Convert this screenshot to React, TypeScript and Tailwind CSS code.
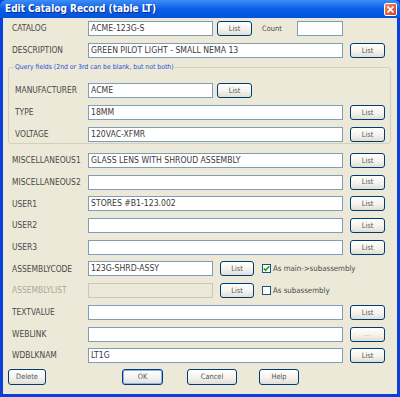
import React from 'react';

const face = "font-['DejaVu_Sans_Condensed','DejaVu_Sans',sans-serif]";

const Field = ({ value = '', w = 'w-[255px]', disabled = false }: { value?: string; w?: string; disabled?: boolean }) => (
  <div
    className={`${w} h-[15px] border px-[2px] text-[8.6px] leading-[13px] text-[#3a3a3a] whitespace-nowrap overflow-hidden ${
      disabled ? 'bg-[#ECE9D8] border-[#C9C7BA]' : 'bg-white border-[#7F9DB9]'
    }`}
  >
    {value}
  </div>
);

const Btn = ({ label = 'List', w = 'w-[35px]', h = 'h-[15px]', faded = false, primary = false }: { label?: string; w?: string; h?: string; faded?: boolean; primary?: boolean }) => (
  <div
    className={`${w} ${h} shrink-0 rounded-[3px] border border-[#003C74] bg-gradient-to-b from-white via-[#F5F4EF] to-[#E0DFD6] flex items-center justify-center text-[7.4px] leading-none ${
      faded ? 'text-[#B5B2A5]' : 'text-[#555]'
    } ${primary ? 'shadow-[inset_0_0_0_1px_#8AB4F0]' : ''}`}
  >
    {label}
  </div>
);

const Row = ({ label, value, labelW = 'w-[76px]', children, dim = false, mt }: { label: string; value?: string; labelW?: string; children?: React.ReactNode; dim?: boolean; mt: string }) => (
  <div className={`flex items-center h-[15px] ${mt}`}>
    <div className={`${labelW} shrink-0 text-[8.4px] leading-none ${dim ? 'text-[#ACA899]' : 'text-[#4a4a4a]'}`}>{label}</div>
    {children ?? (
      <>
        <Field value={value} />
        <div className="ml-[7px]">
          <Btn />
        </div>
      </>
    )}
  </div>
);

const Check = ({ checked, label }: { checked?: boolean; label: string }) => (
  <div className="flex items-center ml-[8px]">
    <div className="w-[9px] h-[9px] border border-[#1C5180] bg-white flex items-center justify-center">
      {checked && (
        <svg width="7" height="7" viewBox="0 0 7 7">
          <path d="M0.8 3.4 L2.6 5.4 L6.3 1.2" stroke="#21A121" strokeWidth="1.6" fill="none" />
        </svg>
      )}
    </div>
    <span className="ml-[2px] text-[7.8px] leading-none text-[#4a4a4a]">{label}</span>
  </div>
);

export default function App() {
  return (
    <div className={`w-[400px] h-[397px] flex flex-col bg-[#0B3FD9] ${face}`}>
      <div className="h-[18px] shrink-0 flex items-center justify-between bg-gradient-to-b from-[#3D8EF7] via-[#0A5DE6] to-[#0253DB] rounded-t-[6px]">
        <span className="pl-[5px] text-white font-bold text-[10px] leading-none [text-shadow:1px_1px_0_#0A2C8C]">
          Edit Catalog Record (table LT)
        </span>
        <div className="mr-[3px] w-[13px] h-[13px] rounded-[2px] border border-white bg-gradient-to-br from-[#EE8A6C] to-[#D33C14] flex items-center justify-center">
          <svg width="7" height="7" viewBox="0 0 7 7">
            <path d="M0.5 0.5 L6.5 6.5 M6.5 0.5 L0.5 6.5" stroke="white" strokeWidth="1.6" />
          </svg>
        </div>
      </div>

      <div className="flex-1 mx-[3px] mb-[3px] bg-[#ECE9D8] flex flex-col pl-[9px]">
        <Row label="CATALOG" mt="mt-[3px]">
          <Field value="ACME-123G-S" w="w-[125px]" />
          <div className="ml-[4px]">
            <Btn />
          </div>
          <span className="ml-[10px] w-[35px] text-[7.4px] leading-none text-[#4a4a4a]">Count</span>
          <Field w="w-[46px]" />
        </Row>
        <Row label="DESCRIPTION" value="GREEN PILOT LIGHT - SMALL NEMA 13" mt="mt-[7px]" />

        <div className="relative ml-[-4px] mt-[9px] w-[383px] border border-[#D0D0BF] rounded-[3px] pl-[6px] pt-[15px] pb-[1px]">
          <span className="absolute left-[5px] top-[-6px] px-[1px] bg-[#ECE9D8] text-[6.8px] leading-[10px] text-[#1E4FD6]">
            Query fields (2nd or 3rd can be blank, but not both)
          </span>
          <Row label="MANUFACTURER" labelW="w-[73px]" mt="mt-0">
            <Field value="ACME" w="w-[125px]" />
            <div className="ml-[4px]">
              <Btn />
            </div>
          </Row>
          <Row label="TYPE" value="18MM" labelW="w-[73px]" mt="mt-[7px]" />
          <Row label="VOLTAGE" value="120VAC-XFMR" labelW="w-[73px]" mt="mt-[7px]" />
        </div>

        <div className="flex flex-col gap-[6.7px] mt-[9px]">
          <Row label="MISCELLANEOUS1" value="GLASS LENS WITH SHROUD ASSEMBLY" mt="mt-0" />
          <Row label="MISCELLANEOUS2" mt="mt-0" />
          <Row label="USER1" value="STORES #B1-123.002" mt="mt-0" />
          <Row label="USER2" mt="mt-0" />
          <Row label="USER3" mt="mt-0" />
          <Row label="ASSEMBLYCODE" mt="mt-0">
            <Field value="123G-SHRD-ASSY" w="w-[125px]" />
            <div className="ml-[7px]">
              <Btn w="w-[34px]" />
            </div>
            <Check checked label="As main->subassembly" />
          </Row>
          <Row label="ASSEMBLYLIST" dim mt="mt-0">
            <Field w="w-[125px]" disabled />
            <div className="ml-[7px]">
              <Btn w="w-[34px]" />
            </div>
            <Check label="As subassembly" />
          </Row>
          <Row label="TEXTVALUE" mt="mt-0" />
          <Row label="WEBLINK" mt="mt-0">
            <Field />
            <div className="ml-[7px]">
              <Btn label="..." faded />
            </div>
          </Row>
          <Row label="WDBLKNAM" value="LT1G" mt="mt-0" />
        </div>

        <div className="flex items-center mt-[5.7px] ml-[-4px]">
          <Btn label="Delete" w="w-[38px]" h="h-[16px]" />
          <div className="ml-[76px]">
            <Btn label="OK" w="w-[41px]" h="h-[16px]" primary />
          </div>
          <div className="ml-[24px]">
            <Btn label="Cancel" w="w-[50px]" h="h-[16px]" />
          </div>
          <div className="ml-[22px]">
            <Btn label="Help" w="w-[40px]" h="h-[16px]" />
          </div>
        </div>
      </div>
    </div>
  );
}
